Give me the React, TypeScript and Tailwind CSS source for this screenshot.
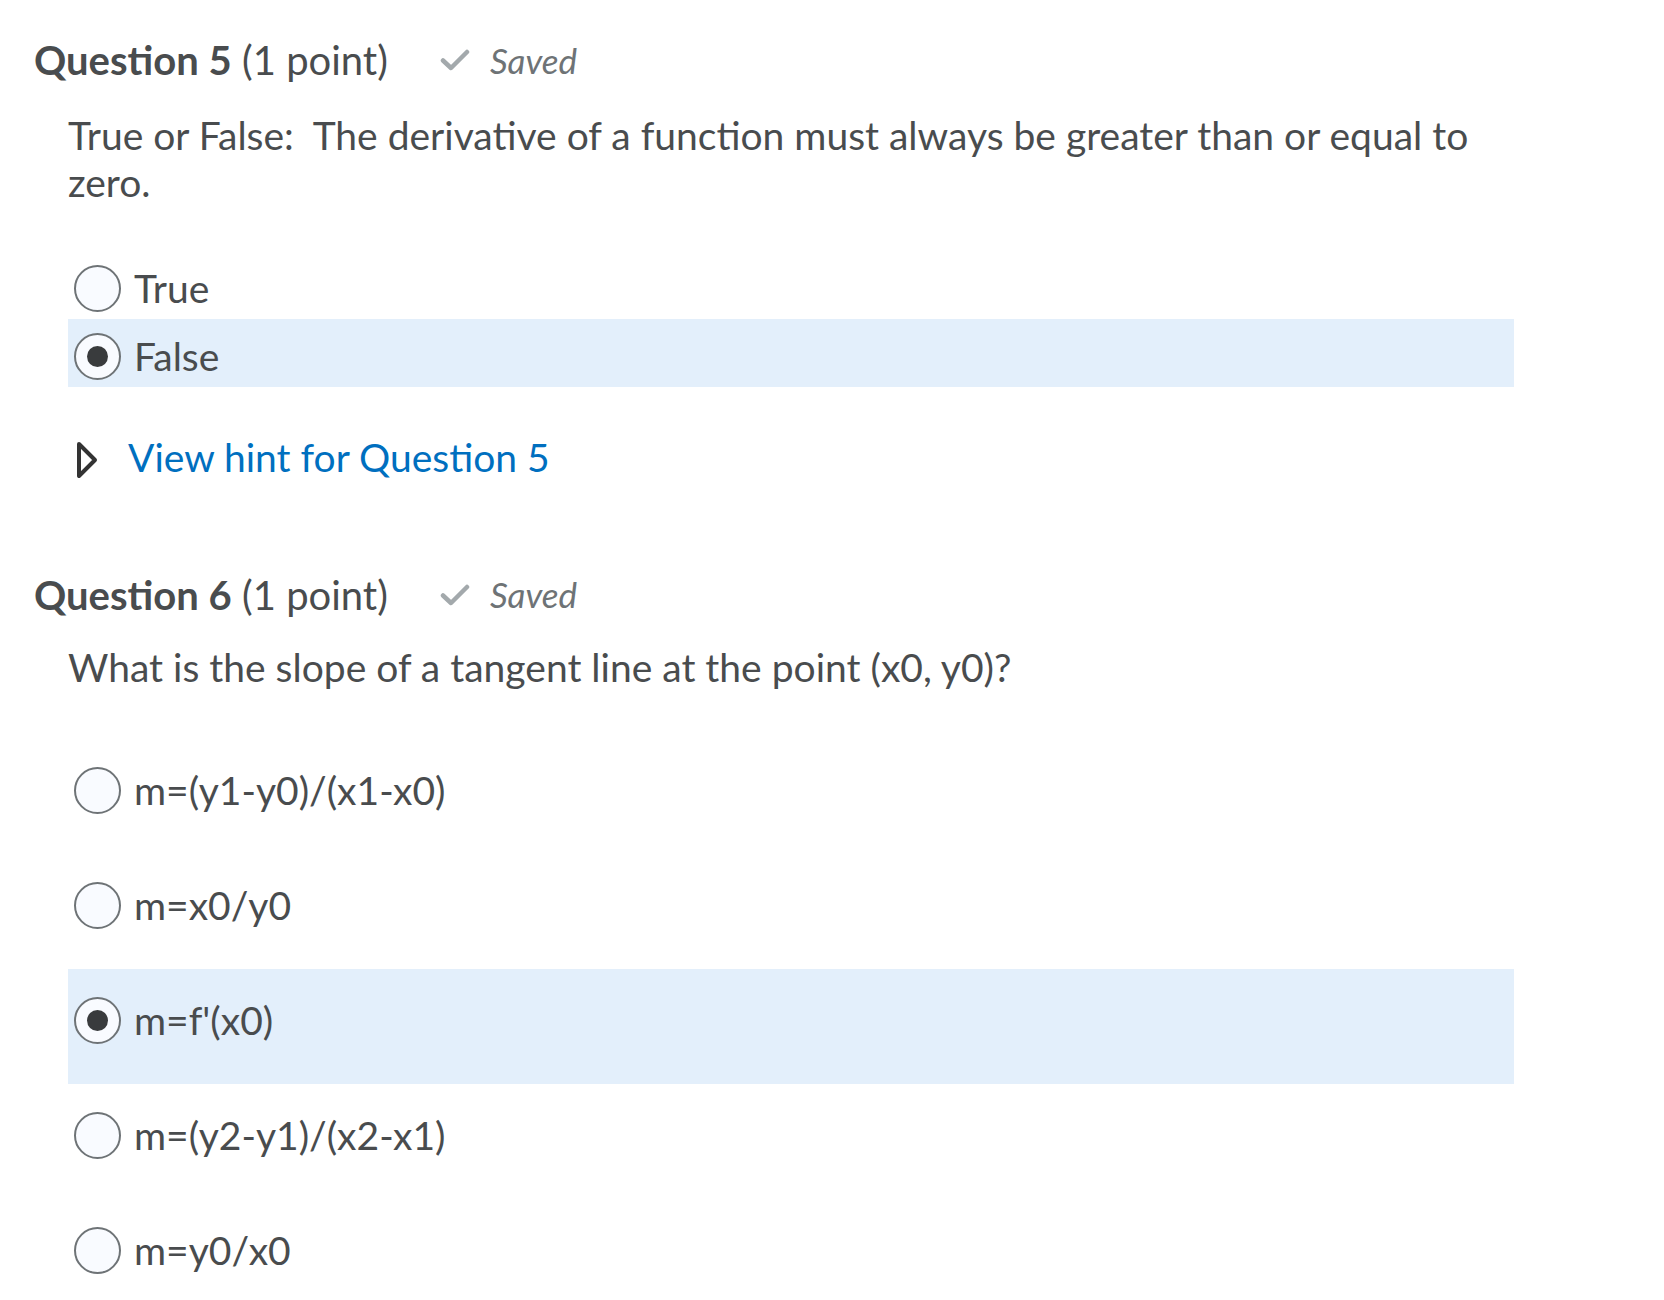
const textColor = "text-[#494c4e]";

function SavedTag() {
  return (
    <span className="flex items-center gap-[20px] text-[35px] italic text-[#6e7376]">
      <svg width="30" height="24" viewBox="0 0 30 24" fill="none">
        <path d="M3 12.5 L11 20 L27 4" stroke="#a3a9ac" strokeWidth="4.5" strokeLinecap="round" strokeLinejoin="round" />
      </svg>
      Saved
    </span>
  );
}

function Radio({ checked }: { checked: boolean }) {
  return (
    <span className="flex h-[47px] w-[47px] shrink-0 items-center justify-center rounded-full border-2 border-[#6e7376] bg-[#f9fbff]">
      {checked && <span className="h-[21px] w-[21px] rounded-full bg-[#393b3d]" />}
    </span>
  );
}

function Option({ label, checked, tall }: { label: string; checked: boolean; tall?: boolean }) {
  return (
    <div
      className={`flex items-center gap-[13px] pl-[6px] ${tall ? "h-[115px] pb-[12px]" : "h-[68px] pt-[6px]"} ${checked ? "bg-[#e3effb]" : ""}`}
    >
      <Radio checked={checked} />
      <span className="text-[39px]">{label}</span>
    </div>
  );
}

function Heading({ num }: { num: number }) {
  return (
    <div className="flex items-center gap-[52px] h-[50px]">
      <h2 className="text-[40px]">
        <span className="font-bold">Question {num}</span> (1 point)
      </h2>
      <SavedTag />
    </div>
  );
}

export default function App() {
  return (
    <div
      className={`min-h-[1300px] bg-white px-[34px] pt-[35px] ${textColor}`}
      style={{ fontFamily: "Lato, 'Open Sans', sans-serif" }}
    >
      <Heading num={5} />
      <div className="ml-[34px] mr-[116px]">
        <p className="mt-[27px] text-[39px] leading-[47px]">
          True or False:&nbsp; The derivative of a function must always be greater than or equal to zero.
        </p>
        <div className="mt-[45px]">
          <Option label="True" checked={false} />
          <Option label="False" checked={true} />
        </div>
        <div className="mt-[41px] flex items-center gap-[30px] pl-[8px]">
          <svg width="22" height="38" viewBox="0 0 22 38" fill="none" className="mt-[6px]">
            <path d="M3 3 L19 19 L3 35 Z" stroke="#333" strokeWidth="4" strokeLinejoin="round" />
          </svg>
          <a href="#" className="text-[39px] text-[#006fbf]">
            View hint for Question 5
          </a>
        </div>
      </div>

      <div className="mt-[83px]">
        <Heading num={6} />
      </div>
      <div className="ml-[34px] mr-[116px]">
        <p className="mt-[24px] text-[39px] leading-[47px]">
          What is the slope of a tangent line at the point (x0, y0)?
        </p>
        <div className="mt-[48px]">
          <Option tall label="m=(y1-y0)/(x1-x0)" checked={false} />
          <Option tall label="m=x0/y0" checked={false} />
          <Option tall label="m=f'(x0)" checked={true} />
          <Option tall label="m=(y2-y1)/(x2-x1)" checked={false} />
          <Option tall label="m=y0/x0" checked={false} />
        </div>
      </div>
    </div>
  );
}
